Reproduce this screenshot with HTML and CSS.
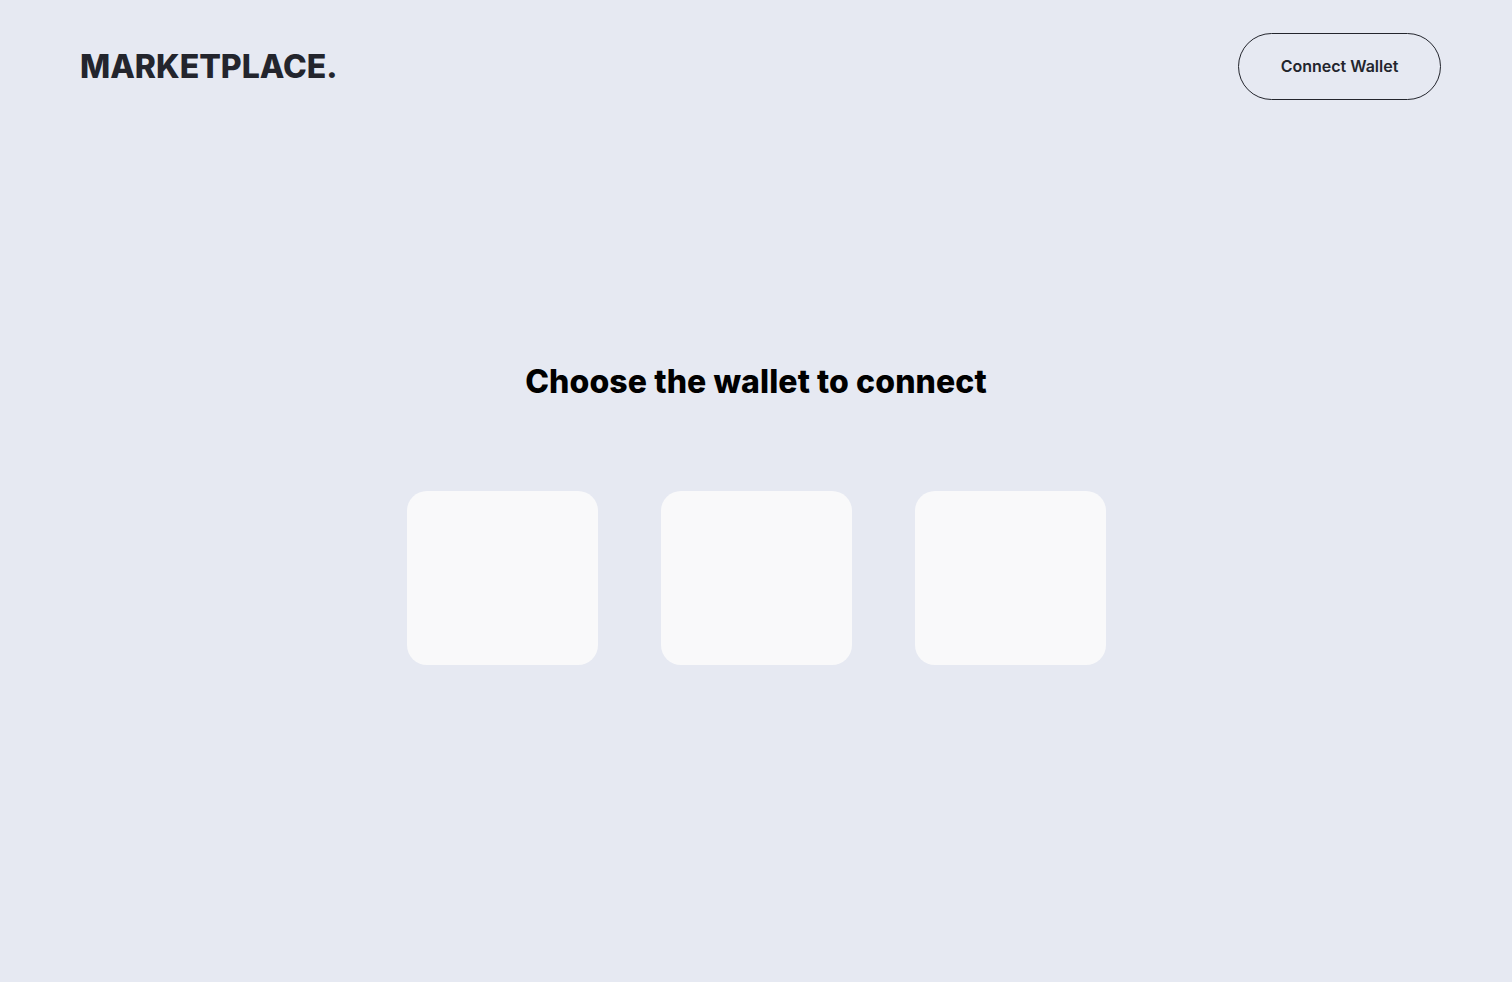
FILE: index.html
```html
<!DOCTYPE html>
<html lang="en">
  <head>
    <meta charset="UTF-8" />
    <meta name="viewport" content="width=device-width, initial-scale=1.0" />
    <title>Marketplace</title>

    <link rel="stylesheet" href="styles.css">
  </head>

  <body>
    <!-- header -->
    <div class="header">
      <a href="/" class="logo">MARKETPLACE.</a>
      <button class="connect-btn">Connect Wallet</button>
    </div>

    <div class="content">
      <h1 class="title">Choose the wallet to connect</h1>

      <div class="wallets">
        <div class="wallet-card"></div>
        <div class="wallet-card"></div>
        <div class="wallet-card"></div>
      </div>
    </div>
  </body>
</html>
```

FILE: styles.css
```css
body {
  margin: 0;
  padding: 0;
  font-family: "Inter", "Liberation Sans", sans-serif;
  background-color: #e6e9f2;
  height: 100vh;
}

a {
  text-decoration: none;
}

.header {
  display: flex;
  justify-content: space-between;
  align-items: center;
  padding: 33px 71px 0 80px;
}

.logo {
  font-size: 32px;
  font-weight: 800;
  color: #23252d;
  letter-spacing: 0;
}

.connect-btn {
  font-family: inherit;
  font-size: 16px;
  font-weight: 600;
  color: #23252d;
  background: transparent;
  border: 1px solid #23252d;
  border-radius: 40px;
  width: 203px;
  height: 67px;
  padding-bottom: 2px;
  cursor: pointer;
}

.content {
  display: flex;
  flex-direction: column;
  align-items: center;
  padding-top: 262px;
}

.title {
  margin: 0;
  font-size: 32px;
  font-weight: 800;
  letter-spacing: 0.1px;
  color: #000;
}

.wallets {
  display: flex;
  gap: 63px;
  margin-top: 90px;
  padding-left: 1px;
}

.wallet-card {
  width: 191px;
  height: 174px;
  background-color: #f9f9fa;
  border-radius: 20px;
}
```
